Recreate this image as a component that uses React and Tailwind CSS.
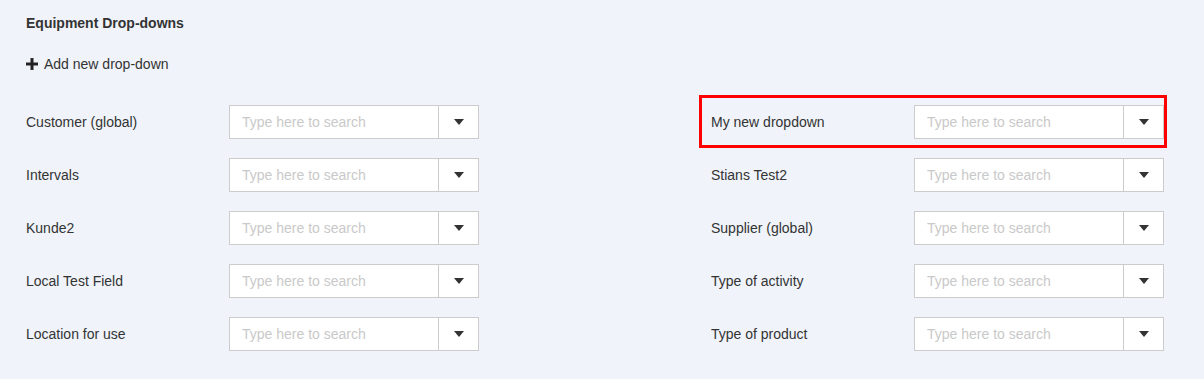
const left = ['Customer (global)', 'Intervals', 'Kunde2', 'Local Test Field', 'Location for use'];
const right = ['My new dropdown', 'Stians Test2', 'Supplier (global)', 'Type of activity', 'Type of product'];

function Caret() {
  return (
    <svg width="10" height="6" viewBox="0 0 10 6">
      <path d="M0 0h10L5 6z" fill="#333" />
    </svg>
  );
}

function Plus() {
  return (
    <svg width="12" height="12" viewBox="0 0 12 12">
      <path d="M4.5 0h3v4.5H12v3H7.5V12h-3V7.5H0v-3h4.5z" fill="#222" />
    </svg>
  );
}

function Row({ label, highlight }) {
  return (
    <div className="relative flex items-center h-[34px]">
      {highlight && (
        <div className="absolute left-[-12px] right-[-3px] top-[-10px] bottom-[-9px] border-[3px] border-[#f00] pointer-events-none" />
      )}
      <span className="w-[203px] text-[14px] text-[#333]">{label}</span>
      <div className="flex w-[250px] h-[34px] bg-white border border-[#ccc]">
        <input
          placeholder="Type here to search"
          className="flex-1 min-w-0 px-[12px] text-[14px] text-[#333] placeholder:text-[#c9c9c9] outline-none bg-transparent"
        />
        <button className="w-[40px] flex items-center justify-center border-l border-[#ccc]">
          <Caret />
        </button>
      </div>
    </div>
  );
}

export default function App() {
  return (
    <div className="min-h-[379px] bg-[#f0f3fa] pl-[26px] pt-[15px] font-['Liberation_Sans',Arial,sans-serif]">
      <h2 className="text-[14px] leading-[16px] font-bold text-[#333]">Equipment Drop-downs</h2>

      <button className="mt-[23px] flex items-center gap-[6px] h-[20px] text-[14px] text-[#333]">
        <Plus />
        Add new drop-down
      </button>

      <div className="mt-[31px] grid grid-cols-[453px_453px] gap-x-[232px] gap-y-[19px]">
        {left.map((l, i) => (
          <div key={l} className="contents">
            <Row label={l} />
            <Row label={right[i]} highlight={i === 0} />
          </div>
        ))}
      </div>
    </div>
  );
}
